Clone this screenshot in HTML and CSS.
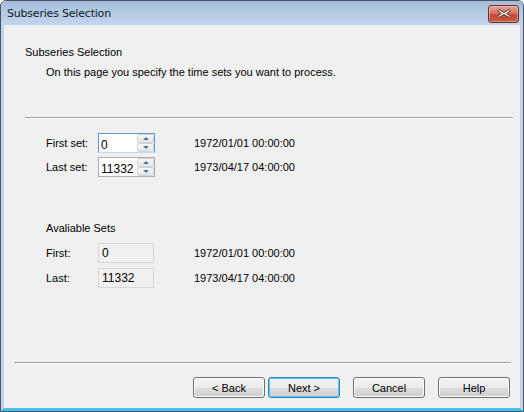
FILE: index.html
```html
<!DOCTYPE html>
<html>
<head>
<meta charset="utf-8">
<link rel="stylesheet" href="styles.css">
</head>
<body>
<div class="window">
  <div class="titlebar">
    <span class="title">Subseries Selection</span>
    <button class="close" aria-label="Close">
      <svg width="16" height="11" viewBox="0 0 16 11">
        <path d="M3 1.5 L8 4.5 L13 1.5 L14.5 3 L10.5 5.5 L14.5 8 L13 9.5 L8 6.5 L3 9.5 L1.5 8 L5.5 5.5 L1.5 3 Z" fill="#ffffff" stroke="#5a2a26" stroke-width="1" stroke-linejoin="round"/>
      </svg>
    </button>
  </div>
  <div class="body">
    <div class="header">
      <div class="heading">Subseries Selection</div>
      <div class="sub">On this page you specify the time sets you want to process.</div>
    </div>
    <div class="sep top-sep"></div>
    <div class="grid sets">
      <span class="label">First set:</span>
      <div class="spin focused"><span class="val">0</span><div class="arrows"><span class="up"></span><span class="down"></span></div></div>
      <span class="date">1972/01/01 00:00:00</span>
      <span class="label">Last set:</span>
      <div class="spin"><span class="val">11332</span><div class="arrows"><span class="up"></span><span class="down"></span></div></div>
      <span class="date">1973/04/17 04:00:00</span>
    </div>
    <div class="avail-title">Avaliable Sets</div>
    <div class="grid avail">
      <span class="label">First:</span>
      <div class="ro">0</div>
      <span class="date">1972/01/01 00:00:00</span>
      <span class="label">Last:</span>
      <div class="ro">11332</div>
      <span class="date">1973/04/17 04:00:00</span>
    </div>
    <div class="footer">
      <div class="sep bottom-sep"></div>
      <div class="buttons">
        <button class="btn">&lt; Back</button>
        <button class="btn default">Next &gt;</button>
        <button class="btn gap">Cancel</button>
        <button class="btn gap">Help</button>
      </div>
    </div>
  </div>
</div>
</body>
</html>
```
FILE: styles.css
```css
html, body {
  margin: 0;
  padding: 0;
  background: #ffffff;
}
body {
  font-family: "Liberation Sans", Arial, sans-serif;
  font-size: 11px;
  color: #000;
}
.window {
  width: 524px;
  height: 412px;
  box-sizing: border-box;
  border: 1px solid #4a5462;
  border-radius: 6px 6px 0 0;
  display: flex;
  flex-direction: column;
  background: #bcd2ea;
  overflow: hidden;
}
.titlebar {
  height: 24px;
  flex: none;
  display: flex;
  align-items: center;
  padding-left: 6px;
  padding-right: 4px;
  background: linear-gradient(#a4bcd8 0%, #b4cae3 45%, #c1d5ec 100%);
}
.title {
  font-family: "DejaVu Sans", sans-serif;
  font-size: 11px;
  letter-spacing: -0.2px;
  color: #0e1a28;
  flex: 1;
  padding-top: 1px;
}
.close {
  width: 31px;
  height: 18px;
  margin-top: 1px;
  padding: 0;
  border: 1px solid #6a2e2e;
  border-radius: 3px;
  background: linear-gradient(#e7a396 0%, #d57465 45%, #c14a35 55%, #c65c45 100%);
  display: flex;
  align-items: center;
  justify-content: center;
  box-shadow: inset 0 0 0 1px rgba(255,210,200,0.45);
}
.body {
  flex: 1;
  display: flex;
  flex-direction: column;
  background: #f0f0f0;
  border-left: 3px solid #bfd4eb;
  border-right: 3px solid #bfd4eb;
  border-bottom: 3px solid #3fc3ea;
}
.header {
  padding: 21px 0 0 21px;
}
.heading {
  line-height: 13px;
}
.sub {
  line-height: 13px;
  margin-top: 7px;
  padding-left: 21px;
}
.sep {
  height: 1px;
  background: #a0a0a0;
  border-bottom: 1px solid #ffffff;
}
.top-sep {
  margin: 38px 7px 0 21px;
}
.grid {
  display: grid;
  grid-template-columns: 52px 57px 1fr;
  align-items: center;
  padding-left: 42px;
}
.grid .date {
  padding-left: 39px;
}
.sets {
  margin-top: 14px;
  row-gap: 4px;
}
.avail {
  margin-top: 8px;
  row-gap: 5px;
  grid-template-columns: 52px 56px 1fr;
}
.avail .date {
  padding-left: 40px;
}
.label, .date {
  line-height: 13px;
}
.spin {
  height: 20px;
  box-sizing: border-box;
  border: 1px solid #abadb3;
  background: #ffffff;
  display: flex;
  align-items: center;
}
.spin.focused {
  border-color: #5b9ad6;
  border-bottom-color: #c5daed;
}
.val {
  flex: 1;
  font-size: 12px;
  padding-left: 2px;
  padding-top: 3px;
}
.arrows {
  width: 17px;
  height: 18px;
  display: flex;
  flex-direction: column;
  align-self: flex-start;
}
.up, .down {
  flex: 1;
  box-sizing: border-box;
  border: 1px solid #d2d2d2;
  border-radius: 2px;
  background: linear-gradient(#f9f9f9, #e6e6e6);
  position: relative;
}
.up::after, .down::after {
  content: "";
  position: absolute;
  left: 5px;
  top: 2px;
  border-left: 3px solid transparent;
  border-right: 3px solid transparent;
}
.up::after {
  border-bottom: 3px solid #5a6f94;
}
.down::after {
  border-top: 3px solid #5a6f94;
}
.avail-title {
  margin-top: 45px;
  padding-left: 42px;
  line-height: 13px;
}
.ro {
  height: 20px;
  box-sizing: border-box;
  border: 1px solid #d6d6d6;
  background: #f0f0f0;
  font-size: 12px;
  padding-left: 3px;
  line-height: 18px;
}
.footer {
  margin-top: auto;
  padding-bottom: 10px;
}
.bottom-sep {
  margin: 0 9px 0 10px;
}
.buttons {
  display: flex;
  justify-content: flex-end;
  margin-top: 13px;
  padding-right: 10px;
  gap: 3px;
}
.btn {
  width: 72px;
  height: 21px;
  box-sizing: border-box;
  padding: 0;
  border: 1px solid #707070;
  border-radius: 3px;
  background: linear-gradient(#f2f2f2 0%, #ebebeb 50%, #dddddd 51%, #cfcfcf 100%);
  box-shadow: inset 0 0 0 1px #fcfcfc;
  font-family: "Liberation Sans", Arial, sans-serif;
  font-size: 11px;
  color: #000;
}
.btn.default {
  border-color: #3c7fb1;
  box-shadow: inset 0 0 0 1px #48d0f8;
}
.btn.gap {
  margin-left: 10px;
}
```
